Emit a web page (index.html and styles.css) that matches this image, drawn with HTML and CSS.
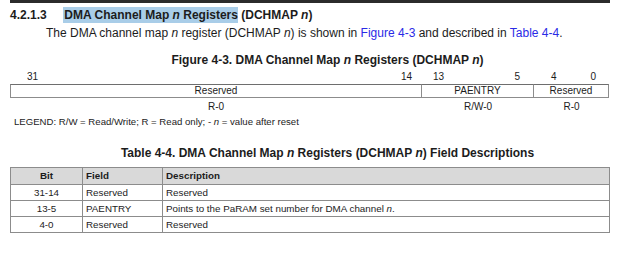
FILE: index.html
```html
<!DOCTYPE html>
<html>
  <head>
    <title>DCHMAP</title>
    <link rel="stylesheet" href="styles.css">
  </head>
  <body>
    <div class="page">
      <div class="rule"></div>

      <h3 class="section">
        <span class="num">4.2.1.3</span>
        <span class="sel">DMA Channel Map <i>n</i> Registers</span> (DCHMAP <i>n</i>)
      </h3>
      <p class="intro">
        The DMA channel map <i>n</i> register (DCHMAP <i>n</i>) is shown in
        <a href="#fig">Figure 4-3</a> and described in <a href="#tbl">Table 4-4</a>.
      </p>

      <div class="caption" id="fig">Figure 4-3. DMA Channel Map <i>n</i> Registers (DCHMAP <i>n</i>)</div>
      <div class="reg">
        <div class="bits b1"><span>31</span><span>14</span></div>
        <div class="bits b2"><span>13</span><span>5</span></div>
        <div class="bits b3"><span>4</span><span>0</span></div>

        <div class="field">Reserved</div>
        <div class="field">PAENTRY</div>
        <div class="field">Reserved</div>

        <div class="access">R-0</div>
        <div class="access">R/W-0</div>
        <div class="access">R-0</div>
      </div>
      <div class="legend">LEGEND: R/W = Read/Write; R = Read only; - <i>n</i> = value after reset</div>

      <div class="caption tcap" id="tbl">Table 4-4. DMA Channel Map <i>n</i> Registers (DCHMAP <i>n</i>) Field Descriptions</div>
      <table class="desc">
        <tr class="head"><th class="c-bit">Bit</th><th class="c-field">Field</th><th>Description</th></tr>
        <tr><td class="c-bit">31-14</td><td>Reserved</td><td>Reserved</td></tr>
        <tr><td class="c-bit">13-5</td><td>PAENTRY</td><td>Points to the PaRAM set number for DMA channel <i>n</i>.</td></tr>
        <tr><td class="c-bit">4-0</td><td>Reserved</td><td>Reserved</td></tr>
      </table>
    </div>
  </body>
</html>
```

FILE: styles.css
```css
body {
  margin: 0;
  background: #fff;
  color: #1c1c1c;
  font-family: "Liberation Sans", Arial, sans-serif;
}
.page {
  width: 600px;
  margin-left: 10px;
}
.rule {
  height: 3px;
  background: #2b2b2b;
}

/* section heading */
.section {
  margin: 4px 0 0;
  font-size: 12px;
  line-height: 16px;
  font-weight: bold;
}
.section .num {
  display: inline-block;
  width: 50px;
}
.sel {
  background: #a9cde8;
  padding: 1px 0 1px 1px;
}
.intro {
  margin: 2px 0 0 36px;
  font-size: 12px;
  line-height: 16px;
}
.intro a {
  color: #2a2ae6;
  text-decoration: none;
}
i {
  font-style: italic;
}

/* captions sit centred on the text column, which is indented */
.caption {
  margin-top: 11px;
  padding-left: 35px;
  text-align: center;
  font-weight: bold;
  font-size: 12px;
  line-height: 16px;
}

/* register layout */
.reg {
  display: grid;
  grid-template-columns: 412px 112px 75px;
  margin-top: 2px;
  font-size: 10px;
}
.bits {
  display: flex;
  justify-content: space-between;
  line-height: 14px;
}
.b1 { padding-left: 17px; padding-right: 10px; }
.b2 { padding-left: 11px; padding-right: 14px; }
.b3 { padding-left: 17px; padding-right: 13px; }
.field {
  border: 1px solid #8c8c8c;
  border-top-color: #6e6e6e;
  border-left: none;
  text-align: center;
  line-height: 12px;
  height: 12px;
}
.field:nth-child(4) {
  border-left: 1px solid #8c8c8c;
}
.access {
  text-align: center;
  line-height: 17px;
}
.legend {
  margin-left: 4px;
  font-size: 9.6px;
  line-height: 14px;
}

.tcap {
  margin-top: 16px;
}

/* field description table */
.desc {
  margin-top: 6px;
  width: 600px;
  border-collapse: collapse;
  font-size: 9.8px;
}
.desc tr {
  height: 16px;
}
.desc tr.head {
  height: 17px;
}
.desc th,
.desc td {
  border: 1px solid #8c8c8c;
  padding: 0 3px;
  text-align: left;
  line-height: 12px;
}
.desc th {
  background: #d9d9d9;
  font-weight: bold;
}
.desc .c-bit {
  width: 65px;
  text-align: center;
}
.desc .c-field {
  width: 73px;
}
```
